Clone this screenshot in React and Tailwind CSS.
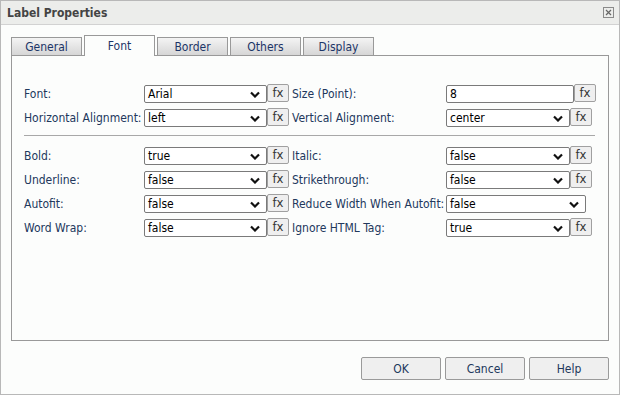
import React from "react";

const font = { fontFamily: '"DejaVu Sans Condensed", "Liberation Sans", Arial, sans-serif' };

function Chevron() {
  return (
    <svg width="10" height="7" viewBox="0 0 10 7" className="shrink-0">
      <path d="M1 1.5 L5 5.5 L9 1.5" fill="none" stroke="#111" strokeWidth="2.2" />
    </svg>
  );
}

function Select({ value, width }) {
  return (
    <div
      className={`h-[18px] ${width} shrink-0 flex items-center justify-between bg-white border border-[#7a7a7a] rounded-[2px] pl-[3px] pr-[6px] text-[12px] text-black`}
    >
      <span>{value}</span>
      <Chevron />
    </div>
  );
}

function Input({ value, width }) {
  return (
    <div
      className={`h-[18px] ${width} shrink-0 flex items-center bg-white border border-[#7a7a7a] rounded-[2px] pl-[3px] text-[12px] text-black`}
    >
      {value}
    </div>
  );
}

function Fx() {
  return (
    <div className="h-[18px] w-[22px] shrink-0 -mt-[3px] flex items-start justify-center bg-[#efefef] border border-[#a0a0a0] rounded-[2px] text-[13px] leading-[15px] text-[#333]">
      fx
    </div>
  );
}

function Label({ children, width }) {
  return <div className={`${width} shrink-0 text-[12px] text-[#22385c]`}>{children}</div>;
}

function Row({ left, right }) {
  return (
    <div className="h-[24px] flex items-center">
      <Label width="w-[120px]">{left.label}</Label>
      <Select value={left.value} width="w-[123px]" />
      <Fx />
      <div className="w-[3px] shrink-0" />
      <Label width="w-[154px]">{right.label}</Label>
      {right.input ? (
        <>
          <Input value={right.value} width="w-[128px]" />
          <Fx />
        </>
      ) : right.noFx ? (
        <Select value={right.value} width="w-[140px]" />
      ) : (
        <>
          <Select value={right.value} width="w-[124px]" />
          <Fx />
        </>
      )}
    </div>
  );
}

const tabs = ["General", "Font", "Border", "Others", "Display"];

export default function App() {
  return (
    <div style={font} className="w-[620px] h-[395px] bg-[#fcfdfc] border border-[#b8b8b8] flex flex-col">
      <div className="h-[24px] shrink-0 bg-[#ecedeb] border-b border-[#d2d2d2] flex items-center justify-between pl-[6px] pr-[5px]">
        <span className="text-[12px] font-bold text-[#444]">Label Properties</span>
        <div className="w-[11px] h-[11px] border border-[#8a8a8a] flex items-center justify-center">
          <svg width="7" height="7" viewBox="0 0 7 7">
            <path d="M1 1 L6 6 M6 1 L1 6" stroke="#666" strokeWidth="1.2" />
          </svg>
        </div>
      </div>

      <div className="px-[10px] pt-[10px]">
        <div className="flex items-end gap-[2px] h-[20px]">
          {tabs.map((t) => (
            <div
              key={t}
              className={
                t === "Font"
                  ? "w-[71px] h-[21px] relative top-[1px] bg-[#fcfdfc] border border-b-0 border-[#999] flex items-center justify-center text-[12px] text-[#1c3567]"
                  : "w-[71px] h-[18px] bg-gradient-to-b from-[#f4f4f4] to-[#d6d6d6] border border-b-0 border-[#999] flex items-center justify-center text-[12px] text-[#1c3567]"
              }
            >
              {t}
            </div>
          ))}
        </div>
        <div className="h-[286px] border border-[#999] px-[12px] pt-[26px]">
          <Row
            left={{ label: "Font:", value: "Arial" }}
            right={{ label: "Size (Point):", value: "8", input: true }}
          />
          <Row
            left={{ label: "Horizontal Alignment:", value: "left" }}
            right={{ label: "Vertical Alignment:", value: "center" }}
          />
          <div className="mt-[5px] mb-[8px] mr-[1px] h-px bg-[#a8a8a8]" />
          <Row left={{ label: "Bold:", value: "true" }} right={{ label: "Italic:", value: "false" }} />
          <Row
            left={{ label: "Underline:", value: "false" }}
            right={{ label: "Strikethrough:", value: "false" }}
          />
          <Row
            left={{ label: "Autofit:", value: "false" }}
            right={{ label: "Reduce Width When Autofit:", value: "false", noFx: true }}
          />
          <Row
            left={{ label: "Word Wrap:", value: "false" }}
            right={{ label: "Ignore HTML Tag:", value: "true" }}
          />
        </div>
      </div>

      <div className="flex justify-end gap-[4px] pr-[10px] pt-[16px]">
        {["OK", "Cancel", "Help"].map((b) => (
          <div
            key={b}
            className="w-[80px] h-[23px] bg-[#efefef] border border-[#9a9a9a] rounded-[2px] flex items-center justify-center text-[12px] text-[#22385c]"
          >
            {b}
          </div>
        ))}
      </div>
    </div>
  );
}
